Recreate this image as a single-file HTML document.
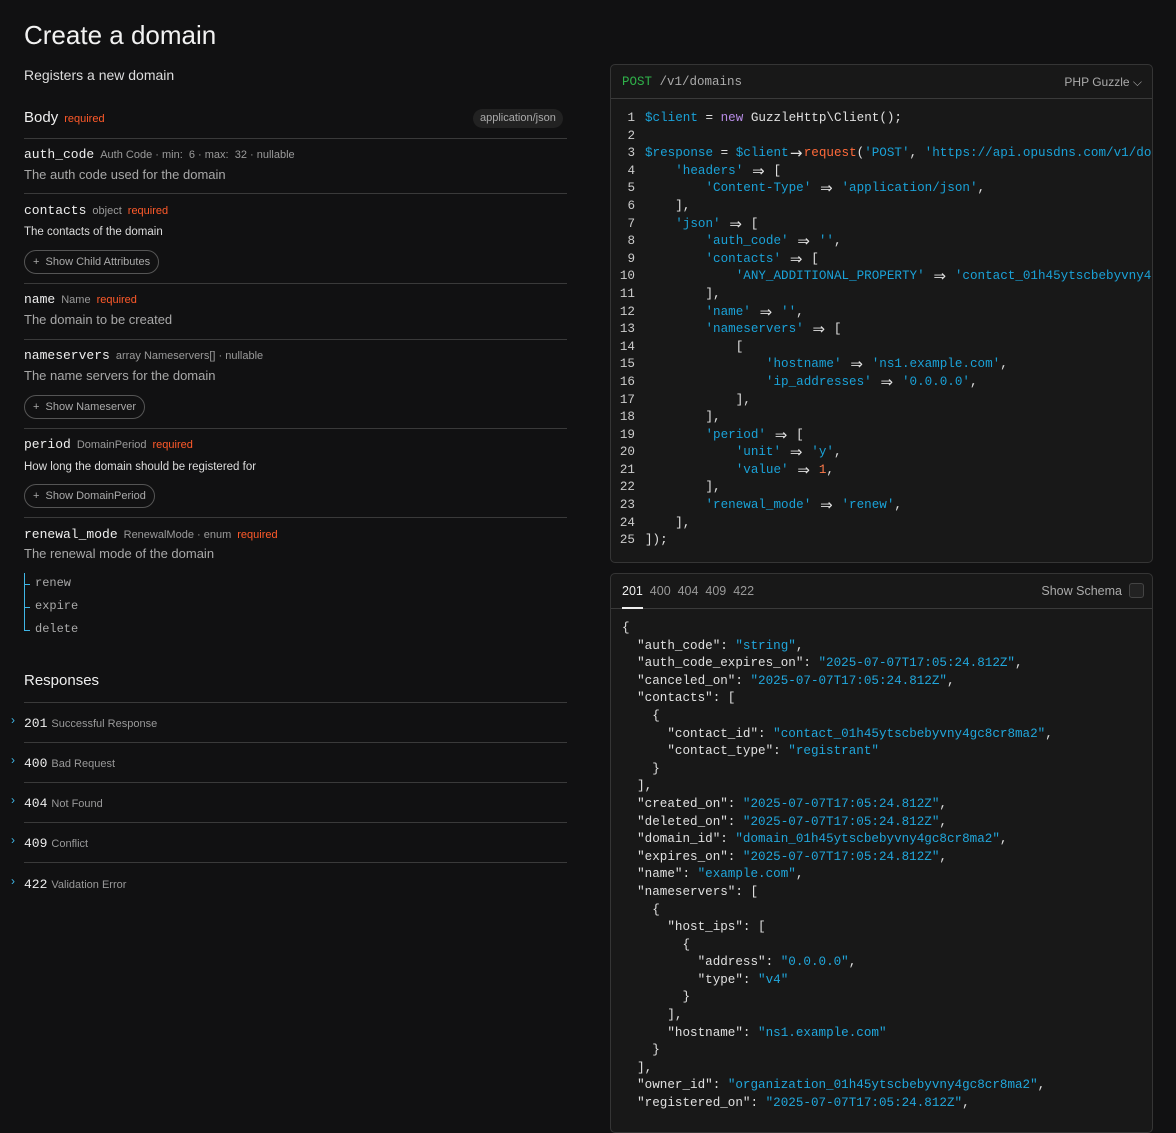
<!DOCTYPE html>
<html><head><meta charset="utf-8"><style>
*{margin:0;padding:0;box-sizing:border-box}
body{width:1176px;height:1113px;overflow:hidden;background:#111112;color:#e6e6e6;font-family:"Liberation Sans",sans-serif;position:relative}
.a{position:absolute;white-space:nowrap}
.mono{font-family:"Liberation Mono",monospace}
.hr{position:absolute;left:24px;width:543px;height:1px;background:#3a3a3a}
.fn{font-family:"Liberation Mono",monospace;font-size:13px;color:#eee}
.meta{font-size:11px;color:#9a9a9a;margin-left:6px}
.req{font-size:11px;color:#ff5a2a;margin-left:6px}
.desc{font-size:13px;color:#a8a8a8}
.btn{position:absolute;left:24px;height:24px;border:1px solid #555;border-radius:12px;font-size:11px;color:#aaa;padding:0 8px;line-height:22px}
.panel{position:absolute;left:610px;width:543px;border:1px solid #353535;border-radius:5px;background:#181818;overflow:hidden}
pre{font-family:"Liberation Mono",monospace;font-size:12.6px;line-height:17.6px;color:#e0e0e0}
.s{color:#1aa2d8}.k{color:#b78ce6}.o{color:#ff6a3a}.n{color:#ff7a4a}.v{color:#21a7dc}.ln{color:#ccc;display:inline-block;width:26px;text-align:right;margin-right:10px}
.r{display:inline-block;width:15.1px;height:17.6px;line-height:17.6px;text-align:center;overflow:hidden;vertical-align:top;font-family:"DejaVu Sans",sans-serif;font-size:15px}
.resp{position:absolute;left:24px;font-size:13px}
.resp .c{font-family:"Liberation Mono",monospace;color:#eee}
.resp .t{font-size:11px;color:#999;margin-left:4px}
.chev{position:absolute;left:11px;color:#3fb6e6;font-size:12px}
</style></head><body>
<div class="a" style="left:24px;top:20px;font-size:26px;color:#f2f2f2">Create a domain</div>
<div class="a" style="left:24px;top:67px;font-size:14px;color:#ddd">Registers a new domain</div>
<div class="a" style="left:24px;top:109px;font-size:15px;color:#eee">Body<span class="req" style="margin-left:6px">required</span></div>
<div class="a" style="left:473px;top:109px;height:19px;padding:0 7px;border-radius:10px;background:#222;font-size:11px;color:#aaa;line-height:19px">application/json</div>
<div class="hr" style="top:138px"></div>
<div class="a" style="left:24px;top:145px"><span class="fn">auth_code</span><span class="meta">Auth Code · min: &nbsp;6 · max: &nbsp;32 · nullable</span></div>
<div class="a desc" style="left:24px;top:167px">The auth code used for the domain</div>
<div class="hr" style="top:193px"></div>
<div class="a" style="left:24px;top:201px"><span class="fn">contacts</span><span class="meta">object</span><span class="req">required</span></div>
<div class="a" style="left:24px;top:226px;font-size:11.5px;color:#ddd">The contacts of the domain</div>
<div class="btn" style="top:250px">+ &nbsp;Show Child Attributes</div>
<div class="hr" style="top:283px"></div>
<div class="a" style="left:24px;top:290px"><span class="fn">name</span><span class="meta">Name</span><span class="req">required</span></div>
<div class="a desc" style="left:24px;top:312px">The domain to be created</div>
<div class="hr" style="top:339px"></div>
<div class="a" style="left:24px;top:346px"><span class="fn">nameservers</span><span class="meta">array Nameservers[] · nullable</span></div>
<div class="a desc" style="left:24px;top:368px">The name servers for the domain</div>
<div class="btn" style="top:395px">+ &nbsp;Show Nameserver</div>
<div class="hr" style="top:428px"></div>
<div class="a" style="left:24px;top:435px"><span class="fn">period</span><span class="meta">DomainPeriod</span><span class="req">required</span></div>
<div class="a" style="left:24px;top:461px;font-size:11.5px;color:#ddd">How long the domain should be registered for</div>
<div class="btn" style="top:484px">+ &nbsp;Show DomainPeriod</div>
<div class="hr" style="top:517px"></div>
<div class="a" style="left:24px;top:525px"><span class="fn">renewal_mode</span><span class="meta">RenewalMode · enum</span><span class="req">required</span></div>
<div class="a desc" style="left:24px;top:546px">The renewal mode of the domain</div>
<div class="a" style="left:24px;top:573px;width:1px;height:57px;background:#3fb6e6"></div>
<div class="a" style="left:24px;top:584px;width:6px;height:1px;background:#3fb6e6"></div>
<div class="a" style="left:24px;top:607px;width:6px;height:1px;background:#3fb6e6"></div>
<div class="a" style="left:24px;top:630px;width:6px;height:1px;background:#3fb6e6"></div>
<div class="a mono" style="left:35px;top:576px;font-size:12px;color:#aaa">renew</div>
<div class="a mono" style="left:35px;top:599px;font-size:12px;color:#aaa">expire</div>
<div class="a mono" style="left:35px;top:622px;font-size:12px;color:#aaa">delete</div>
<div class="a" style="left:24px;top:672px;font-size:15px;color:#eee">Responses</div>
<div class="hr" style="top:702px"></div>
<div class="chev" style="top:713px">›</div><div class="resp" style="top:715px"><span class="c">201</span><span class="t">Successful Response</span></div>
<div class="hr" style="top:742px"></div>
<div class="chev" style="top:753px">›</div><div class="resp" style="top:755px"><span class="c">400</span><span class="t">Bad Request</span></div>
<div class="hr" style="top:782px"></div>
<div class="chev" style="top:793px">›</div><div class="resp" style="top:795px"><span class="c">404</span><span class="t">Not Found</span></div>
<div class="hr" style="top:822px"></div>
<div class="chev" style="top:833px">›</div><div class="resp" style="top:835px"><span class="c">409</span><span class="t">Conflict</span></div>
<div class="hr" style="top:862px"></div>
<div class="chev" style="top:874px">›</div><div class="resp" style="top:876px"><span class="c">422</span><span class="t">Validation Error</span></div>

<div class="panel" style="top:64px;height:499px">
<div style="height:34px;border-bottom:1px solid #3a3a3a;position:relative">
<div class="a mono" style="left:11px;top:10px;font-size:12.5px"><span style="color:#2fb24a">POST</span> <span style="color:#aaa">/v1/domains</span></div>
<div class="a" style="right:10px;top:10px;font-size:12px;color:#aaa">PHP Guzzle ⌵</div>
</div>
<pre style="padding:11px 0 0 0;margin-left:-2px">
<span class="ln">1</span><span class="s">$client</span> = <span class="k">new</span> GuzzleHttp\Client();
<span class="ln">2</span>
<span class="ln">3</span><span class="s">$response</span> = <span class="s">$client</span><span class="r">→</span><span class="o">request</span>(<span class="s">'POST'</span>, <span class="s">'https://api.opusdns.com/v1/domains'</span>, [
<span class="ln">4</span>    <span class="s">'headers'</span> <span class="r">⇒</span> [
<span class="ln">5</span>        <span class="s">'Content-Type'</span> <span class="r">⇒</span> <span class="s">'application/json'</span>,
<span class="ln">6</span>    ],
<span class="ln">7</span>    <span class="s">'json'</span> <span class="r">⇒</span> [
<span class="ln">8</span>        <span class="s">'auth_code'</span> <span class="r">⇒</span> <span class="s">''</span>,
<span class="ln">9</span>        <span class="s">'contacts'</span> <span class="r">⇒</span> [
<span class="ln">10</span>            <span class="s">'ANY_ADDITIONAL_PROPERTY'</span> <span class="r">⇒</span> <span class="s">'contact_01h45ytscbebyvny4gc8cr8ma2'</span>,
<span class="ln">11</span>        ],
<span class="ln">12</span>        <span class="s">'name'</span> <span class="r">⇒</span> <span class="s">''</span>,
<span class="ln">13</span>        <span class="s">'nameservers'</span> <span class="r">⇒</span> [
<span class="ln">14</span>            [
<span class="ln">15</span>                <span class="s">'hostname'</span> <span class="r">⇒</span> <span class="s">'ns1.example.com'</span>,
<span class="ln">16</span>                <span class="s">'ip_addresses'</span> <span class="r">⇒</span> <span class="s">'0.0.0.0'</span>,
<span class="ln">17</span>            ],
<span class="ln">18</span>        ],
<span class="ln">19</span>        <span class="s">'period'</span> <span class="r">⇒</span> [
<span class="ln">20</span>            <span class="s">'unit'</span> <span class="r">⇒</span> <span class="s">'y'</span>,
<span class="ln">21</span>            <span class="s">'value'</span> <span class="r">⇒</span> <span class="n">1</span>,
<span class="ln">22</span>        ],
<span class="ln">23</span>        <span class="s">'renewal_mode'</span> <span class="r">⇒</span> <span class="s">'renew'</span>,
<span class="ln">24</span>    ],
<span class="ln">25</span>]);
</pre>
</div>

<div class="panel" style="top:573px;height:560px">
<div style="height:35px;border-bottom:1px solid #3a3a3a;position:relative">
<div class="a" style="left:11px;top:10px;font-size:12.5px;color:#999"><span style="color:#eee">201</span>&nbsp; 400&nbsp; 404&nbsp; 409&nbsp; 422</div>
<div class="a" style="left:11px;top:33px;width:21px;height:2px;background:#eee"></div>
<div class="a" style="right:30px;top:10px;font-size:12.5px;color:#aaa">Show Schema</div>
<div class="a" style="right:8px;top:9px;width:15px;height:15px;border:1px solid #444;border-radius:3px;background:#222"></div>
</div>
<pre style="padding:11px 0 0 11px">{
  "auth_code": <span class="v">"string"</span>,
  "auth_code_expires_on": <span class="v">"2025-07-07T17:05:24.812Z"</span>,
  "canceled_on": <span class="v">"2025-07-07T17:05:24.812Z"</span>,
  "contacts": [
    {
      "contact_id": <span class="v">"contact_01h45ytscbebyvny4gc8cr8ma2"</span>,
      "contact_type": <span class="v">"registrant"</span>
    }
  ],
  "created_on": <span class="v">"2025-07-07T17:05:24.812Z"</span>,
  "deleted_on": <span class="v">"2025-07-07T17:05:24.812Z"</span>,
  "domain_id": <span class="v">"domain_01h45ytscbebyvny4gc8cr8ma2"</span>,
  "expires_on": <span class="v">"2025-07-07T17:05:24.812Z"</span>,
  "name": <span class="v">"example.com"</span>,
  "nameservers": [
    {
      "host_ips": [
        {
          "address": <span class="v">"0.0.0.0"</span>,
          "type": <span class="v">"v4"</span>
        }
      ],
      "hostname": <span class="v">"ns1.example.com"</span>
    }
  ],
  "owner_id": <span class="v">"organization_01h45ytscbebyvny4gc8cr8ma2"</span>,
  "registered_on": <span class="v">"2025-07-07T17:05:24.812Z"</span>,
</pre>
</div>
</body></html>
